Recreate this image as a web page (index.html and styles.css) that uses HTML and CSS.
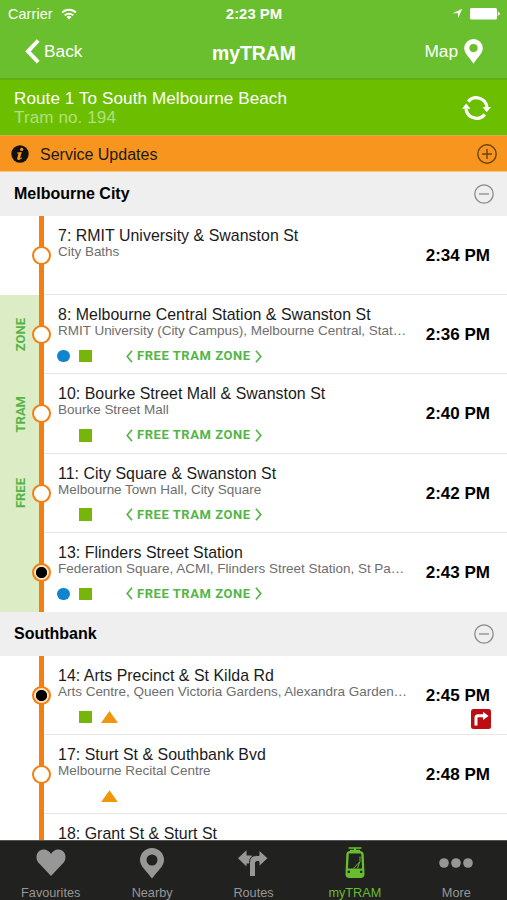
FILE: index.html
```
<!DOCTYPE html>
<html lang="en">
<head>
  <meta charset="UTF-8" />
  <meta name="viewport" content="width=device-width, initial-scale=1.0"/>
  <title>myTRAM</title>
  <link rel="stylesheet" href="styles.css">
</head>
<body>
  <div class="app">
    <header class="top">
      <div class="status-bar">
        <div class="carrier">
          <span>Carrier</span>
          <svg width="16" height="12" viewBox="0 0 16 12" fill="none" stroke="#fff" stroke-width="2">
            <path d="M1 4.6a10 10 0 0 1 14 0M3.7 7.4a6.2 6.2 0 0 1 8.6 0"/>
            <path d="M8 11.4L5.5 9a3.6 3.6 0 0 1 5 0z" fill="#fff" stroke="none"/>
          </svg>
        </div>
        <div class="clock">2:23 PM</div>
        <div class="indicators">
          <svg width="11" height="11" viewBox="0 0 11 11" fill="#fff"><path d="M10.3.7L6 10.2V5.3H.6z"/></svg>
          <svg width="30" height="12" viewBox="0 0 30 12" fill="#fff"><rect width="27" height="11.5" rx="1.5"/><path d="M27.8 3.8q2 .4 2 2t-2 2z"/></svg>
        </div>
      </div>
      <nav class="nav-bar">
        <div class="back">
          <svg width="15" height="25" viewBox="0 0 15 25" fill="none" stroke="#fff" stroke-width="4"><path d="M13.2 1.5L3 12.3l10.2 10.8"/></svg>
          <span>Back</span>
        </div>
        <h1>myTRAM</h1>
        <div class="map">
          <span>Map</span>
          <svg width="19" height="25" viewBox="0 0 19 25" fill="#fff"><path fill-rule="evenodd" d="M9.5 0a9.3 9.3 0 0 1 9.3 9.3c0 4.7-4.2 8-9.3 15.5C4.4 17.3.2 14 .2 9.3A9.3 9.3 0 0 1 9.5 0zm0 5a4.1 4.1 0 1 0 0 8.2 4.1 4.1 0 0 0 0-8.2z"/></svg>
        </div>
      </nav>
    </header>

    <div class="route">
      <div class="route-text">
        <div>Route 1 To South Melbourne Beach</div>
        <div class="tram-no">Tram no. 194</div>
      </div>
      <svg width="29" height="26" viewBox="0 0 29 26" fill="none" stroke="#fff" stroke-width="3.2">
        <path d="M6.2 6.6A10.7 10.7 0 0 1 25 12M22.8 19.4A10.7 10.7 0 0 1 4 14"/>
        <path d="M20.5 12H29l-4.3 5.3zM0 13.800h8.5L4.2 8.5z" fill="#fff" stroke="none"/>
      </svg>
    </div>

    <div class="updates">
      <svg width="18" height="18" viewBox="0 0 18 18"><circle cx="9" cy="9" r="8.7" fill="#111"/><circle cx="10.7" cy="4.4" r="1.6" fill="#f7951f"/><path d="M6.2 7.5l4.6-.6-1.7 6.1q0 .7 1.5-.4l.5.5q-2 2-3.7 2-1.6 0-1.2-1.8l1.2-4.5-1.3-.5z" fill="#f7951f"/></svg>
      <span>Service Updates</span>
      <svg class="toggle" width="20" height="20" viewBox="0 0 20 20" fill="none" stroke="#6b430f" stroke-width="1.4"><circle cx="10" cy="10" r="9.2"/><path d="M5 10h10M10 5v10"/></svg>
    </div>

    <main class="stops">
      <section>
        <div class="section-head">
          <h2>Melbourne City</h2>
          <svg width="20" height="20" viewBox="0 0 20 20" fill="none" stroke="#8b8b8b" stroke-width="1.3"><circle cx="10" cy="10" r="9.2"/><path d="M5 10h10"/></svg>
        </div>

        <div class="stop">
          <div class="side"></div>
          <div class="line"><i class="dot"></i></div>
          <div class="info">
            <h3>7: RMIT University &amp; Swanston St</h3>
            <p>City Baths</p>
          </div>
          <div class="time">2:34 PM</div>
        </div>

        <!-- Free tram zone -->
        <div class="stop free">
          <div class="side"><span>ZONE</span></div>
          <div class="line"><i class="dot"></i></div>
          <div class="info">
            <h3>8: Melbourne Central Station &amp; Swanston St</h3>
            <p>RMIT University (City Campus), Melbourne Central, Stat…</p>
            <div class="links">
              <i class="train"></i><i class="tram"></i>
              <div class="ftz"><svg width="7" height="13" viewBox="0 0 7 13"><path d="M6 .8L1.2 6.5 6 12.2"/></svg><span>FREE TRAM ZONE</span><svg width="7" height="13" viewBox="0 0 7 13"><path d="M1 .8l4.8 5.7L1 12.2"/></svg></div>
            </div>
          </div>
          <div class="time">2:36 PM</div>
        </div>

        <div class="stop free">
          <div class="side"><span>TRAM</span></div>
          <div class="line"><i class="dot"></i></div>
          <div class="info">
            <h3>10: Bourke Street Mall &amp; Swanston St</h3>
            <p>Bourke Street Mall</p>
            <div class="links">
              <i class="tram"></i>
              <div class="ftz"><svg width="7" height="13" viewBox="0 0 7 13"><path d="M6 .8L1.2 6.5 6 12.2"/></svg><span>FREE TRAM ZONE</span><svg width="7" height="13" viewBox="0 0 7 13"><path d="M1 .8l4.8 5.7L1 12.2"/></svg></div>
            </div>
          </div>
          <div class="time">2:40 PM</div>
        </div>

        <div class="stop free">
          <div class="side"><span>FREE</span></div>
          <div class="line"><i class="dot"></i></div>
          <div class="info">
            <h3>11: City Square &amp; Swanston St</h3>
            <p>Melbourne Town Hall, City Square</p>
            <div class="links">
              <i class="tram"></i>
              <div class="ftz"><svg width="7" height="13" viewBox="0 0 7 13"><path d="M6 .8L1.2 6.5 6 12.2"/></svg><span>FREE TRAM ZONE</span><svg width="7" height="13" viewBox="0 0 7 13"><path d="M1 .8l4.8 5.7L1 12.2"/></svg></div>
            </div>
          </div>
          <div class="time">2:42 PM</div>
        </div>

        <div class="stop free last">
          <div class="side"></div>
          <div class="line"><i class="dot major"></i></div>
          <div class="info">
            <h3>13: Flinders Street Station</h3>
            <p>Federation Square, ACMI, Flinders Street Station, St Pa…</p>
            <div class="links">
              <i class="train"></i><i class="tram"></i>
              <div class="ftz"><svg width="7" height="13" viewBox="0 0 7 13"><path d="M6 .8L1.2 6.5 6 12.2"/></svg><span>FREE TRAM ZONE</span><svg width="7" height="13" viewBox="0 0 7 13"><path d="M1 .8l4.8 5.7L1 12.2"/></svg></div>
            </div>
          </div>
          <div class="time">2:43 PM</div>
        </div>
      </section>

      <section>
        <div class="section-head">
          <h2>Southbank</h2>
          <svg width="20" height="20" viewBox="0 0 20 20" fill="none" stroke="#8b8b8b" stroke-width="1.3"><circle cx="10" cy="10" r="9.2"/><path d="M5 10h10"/></svg>
        </div>

        <div class="stop">
          <div class="side"></div>
          <div class="line"><i class="dot major"></i></div>
          <div class="info">
            <h3>14: Arts Precinct &amp; St Kilda Rd</h3>
            <p>Arts Centre, Queen Victoria Gardens, Alexandra Garden…</p>
            <div class="links"><i class="tram"></i><i class="bus"></i></div>
          </div>
          <div class="time">2:45 PM
            <svg class="turn" width="20" height="20" viewBox="0 0 20 20"><rect width="20" height="20" rx="2.5" fill="#bd0c12"/><path d="M5 16.500V8.8q0-2 2-2h5.5" fill="none" stroke="#fff" stroke-width="3"/><path d="M12 2.8l5.5 4.1L12 11z" fill="#fff"/></svg>
          </div>
        </div>

        <div class="stop">
          <div class="side"></div>
          <div class="line"><i class="dot"></i></div>
          <div class="info">
            <h3>17: Sturt St &amp; Southbank Bvd</h3>
            <p>Melbourne Recital Centre</p>
            <div class="links"><i class="bus"></i></div>
          </div>
          <div class="time">2:48 PM</div>
        </div>

        <div class="stop">
          <div class="side"></div>
          <div class="line"></div>
          <div class="info"><h3>18: Grant St &amp; Sturt St</h3></div>
          <div class="time"></div>
        </div>
      </section>
    </main>

    <footer class="tabs">
      <div class="tab">
        <svg width="30" height="30" viewBox="0 0 30 30"><path d="M15 28L2.3 14.5C-.5 11 0 5 3.5 2.8 7.500.2 12.500 1.500 15 6c2.500-4.500 7.500-5.800 11.500-3.200C30 5 30.500 11 27.700 14.500z"/></svg>
        <span>Favourites</span>
      </div>
      <div class="tab">
        <svg width="24" height="31" viewBox="0 0 24 31"><path fill-rule="evenodd" d="M12 0a12 12 0 0 1 12 12c0 6-6 10.500-12 18.500C6 22.500 0 18 0 12A12 12 0 0 1 12 0zm0 6.500a5.500 5.500 0 1 0 0 11 5.500 5.500 0 0 0 0-11z"/></svg>
        <span>Nearby</span>
      </div>
      <div class="tab">
        <svg width="30" height="26" viewBox="0 0 30 26">
          <path d="M0 8.300L8.500.3V5.500H12q5 0 5 5v3H8.500v3z"/>
          <path d="M11.500 27V12.500q0-7 7-7h2.500V0L30 8.300 21 16.600V11.500h-2q-1.500 0-1.500 1.500v14z" stroke="#21211f" stroke-width="1"/>
        </svg>
        <span>Routes</span>
      </div>
      <div class="tab active">
        <svg width="20" height="32" viewBox="0 0 20 32"><path d="M3.500.3h13v1.500h-13zM9 1h2v2H9zM5 2.800h10v1.500H5z"/><path fill-rule="evenodd" d="M5 4h10q3.500 0 3.700 3.500L19.500 27q0 4-4 4h-11q-4 0-4-4L1.300 7.500Q1.500 4 5 4zM4.500 6.500q-.8 0-.8 1L3 21.500h14L16.300 7.500q0-1-.8-1zM3.800 23.500a1.300 1.300 0 1 0 .01 0zM16.200 23.500a1.300 1.300 0 1 0 .01 0z"/><path d="M8.500 21.500l6-6.500M15 9.500v5l-2.500 6.500" fill="none" stroke="#67be2d" stroke-width="1"/></svg>
        <span>myTRAM</span>
      </div>
      <div class="tab">
        <svg width="34" height="10" viewBox="0 0 34 10"><circle cx="5" cy="5" r="4.800"/><circle cx="17" cy="5" r="4.800"/><circle cx="29" cy="5" r="4.800"/></svg>
        <span>More</span>
      </div>
    </footer>
  </div>
</body>
</html>
```
FILE: styles.css
```
* {
  box-sizing: border-box;
}

body {
  margin: 0;
  background: #fff;
  font-family: "Liberation Sans", Arial, sans-serif;
  color: #1a1a1a;
}

h1, h2, h3, p {
  margin: 0;
}

svg {
  display: block;
  flex: none;
}

.app {
  display: flex;
  flex-direction: column;
  width: 507px;
  height: 900px;
  overflow: hidden;
}

/* Header */
.top {
  height: 80px;
  flex: none;
  background: #69bf2d;
  border-bottom: 2px solid #5fae14;
  color: #fff;
}

.status-bar {
  display: grid;
  grid-template-columns: 1fr auto 1fr;
  align-items: center;
  height: 27px;
  padding: 0 7px 0 8px;
  font-size: 14.4px;
}

.carrier {
  display: flex;
  align-items: center;
  gap: 8px;
  letter-spacing: 0.1px;
}

.clock {
  font-size: 14.9px;
  font-weight: bold;
}

.indicators {
  display: flex;
  align-items: center;
  justify-content: flex-end;
  gap: 7px;
}

.nav-bar {
  display: grid;
  grid-template-columns: 1fr auto 1fr;
  align-items: center;
  height: 49px;
  padding: 0 24px 0 25px;
  font-size: 17.3px;
}

.nav-bar h1 {
  font-size: 19.4px;
  line-height: 24px;
  padding-top: 2px;
}

.back, .map {
  display: flex;
  align-items: center;
  gap: 4px;
}

.map {
  justify-content: flex-end;
  gap: 6px;
}

.route {
  display: flex;
  justify-content: space-between;
  align-items: center;
  flex: none;
  height: 55px;
  padding: 0 16px 0 14px;
  background: #6cbf00;
  color: #fff;
  font-size: 17.1px;
  line-height: 19px;
  letter-spacing: 0.08px;
}

.tram-no {
  color: #b2df80;
}

.updates {
  display: flex;
  align-items: center;
  flex: none;
  height: 37px;
  padding: 1px 10px 0 11px;
  background: #f7951f;
  border-top: 1px solid #c9b154;
  border-bottom: 1px solid #f3c58c;
  font-size: 16px;
}

.updates span {
  margin-left: 11px;
  padding-top: 1px;
}

.toggle {
  margin-left: auto;
}

/* Stop list */
.stops {
  flex: 1;
  min-height: 0;
  overflow: hidden;
}

.section-head {
  display: flex;
  justify-content: space-between;
  align-items: center;
  height: 44px;
  padding: 0 13px 0 14px;
  background: #efefef;
}

.section-head h2 {
  font-size: 16px;
  color: #000;
}

.stop {
  display: grid;
  grid-template-columns: 39px 5px 1fr 97px;
  height: 79.2px;
}

.side {
  display: flex;
  align-items: center;
  justify-content: center;
  padding-left: 2px;
  font: bold 13px Roboto, sans-serif;
  color: #55b548;
}

.side span {
  writing-mode: vertical-rl;
  transform: rotate(180deg);
}

.free .side {
  background: #dcecc4;
}

.line {
  display: flex;
  align-items: center;
  justify-content: center;
  background: #f57f0e;
}

.dot {
  flex: none;
  width: 19px;
  height: 19px;
  border: 2.5px solid #f57f0e;
  border-radius: 50%;
  background: #fff;
}

.dot.major {
  background: radial-gradient(circle, #000 5.2px, #ffe2c0 6px);
}

.info {
  padding: 10px 0 0 14px;
  border-bottom: 1px solid #e6e6e6;
  white-space: nowrap;
}

.info h3 {
  padding-top: 1px;
  font-size: 15.9px;
  font-weight: normal;
  line-height: 17px;
  letter-spacing: 0.04px;
}

.info p {
  height: 16px;
  font-size: 13.5px;
  line-height: 16px;
  letter-spacing: -0.02px;
  color: #6e6e6e;
}

.links {
  display: grid;
  grid-template-columns: 13px 13px 17px auto;
  column-gap: 9px;
  align-items: center;
  justify-content: start;
  height: 16px;
  margin: 9px 0 0 -1px;
}

.train {
  grid-column: 1;
  width: 12.5px;
  height: 12.5px;
  border-radius: 50%;
  background: #0f84cf;
}

.tram {
  grid-column: 2;
  width: 12.5px;
  height: 12.5px;
  background: #78b50a;
}

.bus {
  grid-column: 3;
  width: 17px;
  height: 12px;
  background: #f0960a;
  clip-path: polygon(50% 0, 100% 100%, 0 100%);
}

.ftz {
  grid-column: 4;
  display: flex;
  align-items: center;
  gap: 4px;
  margin-left: -1px;
  font: bold 13px/16px Roboto, sans-serif;
  letter-spacing: 0.55px;
  color: #55b548;
}

.ftz svg {
  fill: none;
  stroke: #55b548;
  stroke-width: 1.7;
}

.time {
  position: relative;
  padding: 30px 17px 0 0;
  border-bottom: 1px solid #e6e6e6;
  font-size: 17px;
  font-weight: bold;
  line-height: 19px;
  text-align: right;
  color: #000;
}

.turn {
  position: absolute;
  right: 16px;
  top: 53px;
}

.last .info, .last .time {
  border-bottom: 0;
}

/* Tab bar */
.tabs {
  display: grid;
  grid-template-columns: repeat(5, 1fr);
  flex: none;
  height: 60px;
  background: #21211f;
  border-top: 1px solid #555;
  font-size: 12.7px;
  color: #979797;
}

.tab {
  display: grid;
  grid-template-rows: 44px 15px;
  justify-items: center;
  align-items: center;
  line-height: 14px;
  fill: #979797;
}

.tab.active {
  color: #67be2d;
  fill: #67be2d;
}
```
